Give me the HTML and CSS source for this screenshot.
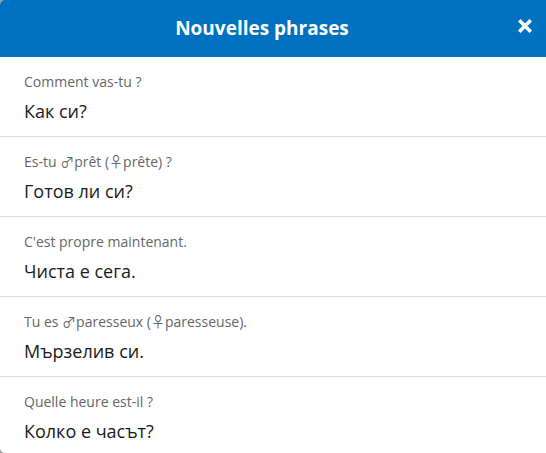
FILE: index.html
```html
<!DOCTYPE html>
<html lang="fr">
<head>
<meta charset="utf-8">
<title>Nouvelles phrases</title>
<link rel="stylesheet" href="styles.css">
</head>
<body>
<div class="modal">
  <header class="modal-header">
    <h1 class="modal-title">Nouvelles phrases</h1>
    <button class="close" aria-label="Fermer">
      <svg width="14" height="14" viewBox="0 0 14 14"><path d="M2.5 2.5 L11.5 11.5 M11.5 2.5 L2.5 11.5" stroke="#fff" stroke-width="3.6" stroke-linecap="square"/></svg>
    </button>
  </header>
  <ul class="phrases">
    <li class="phrase"><div class="fr">Comment vas-tu ?</div><div class="bg">Как си?</div></li>
    <li class="phrase"><div class="fr">Es-tu <span class="sym">♂</span>prêt (<span class="sym">♀</span>prête) ?</div><div class="bg">Готов ли си?</div></li>
    <li class="phrase"><div class="fr">C'est propre maintenant.</div><div class="bg">Чиста е сега.</div></li>
    <li class="phrase"><div class="fr">Tu es <span class="sym">♂</span>paresseux (<span class="sym">♀</span>paresseuse).</div><div class="bg">Мързелив си.</div></li>
    <li class="phrase"><div class="fr">Quelle heure est-il ?</div><div class="bg">Колко е часът?</div></li>
  </ul>
</div>
</body>
</html>
```
FILE: styles.css
```css
html, body {
  margin: 0;
  padding: 0;
  background: #9a9a9a;
}
body {
  font-family: "Open Sans", "DejaVu Sans", sans-serif;
}
.modal {
  width: 546px;
  height: 453px;
  background: #fff;
  border-radius: 5px 0 0 5px;
  overflow: hidden;
}
.modal-header {
  height: 57px;
  padding-right: 22px;
  background: #0070c0;
  display: flex;
  align-items: center;
  justify-content: center;
  position: relative;
}
.modal-title {
  margin: 0;
  color: #fff;
  font-size: 19px;
  font-weight: 700;
  line-height: 24px;
  position: relative;
  top: -1px;
}
.close {
  position: absolute;
  right: 14px;
  top: 19px;
  width: 14px;
  height: 14px;
  padding: 0;
  border: 0;
  background: none;
  display: flex;
}
.phrases {
  list-style: none;
  margin: 0;
  padding: 0;
}
.phrase {
  padding: 15px 24px 13px;
  border-bottom: 1px solid #dcdcdc;
  display: flex;
  flex-direction: column;
  gap: 7px;
}
.fr {
  font-size: 14px;
  line-height: 20px;
  height: 20px;
  color: #666;
}
.sym {
  font-family: "Noto Sans CJK JP", "DejaVu Sans", sans-serif;
  font-size: 14px;
  line-height: 1;
  color: #666;
}
.bg {
  font-size: 18px;
  line-height: 24px;
  color: #1a1a1a;
}
```
